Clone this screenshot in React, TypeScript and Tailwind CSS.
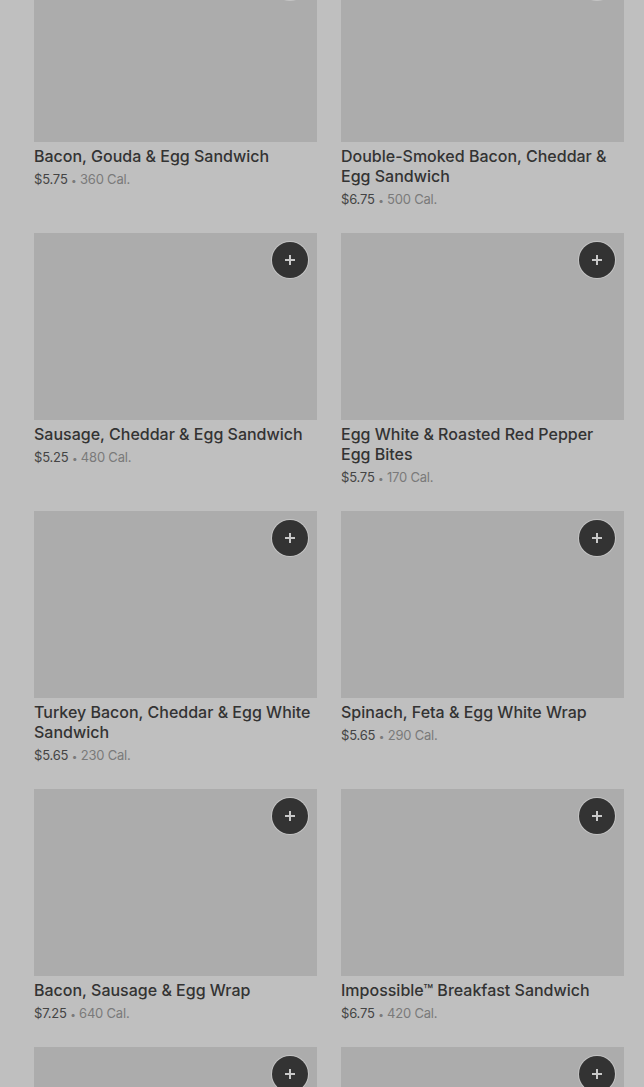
import React from 'react';

// Items in the breakfast section (page is dimmed by an overlay)
const items = [
  { name: "Bacon, Gouda & Egg Sandwich", price: "$5.75", cal: "360 Cal." },
  { name: "Double-Smoked Bacon, Cheddar & Egg Sandwich", price: "$6.75", cal: "500 Cal." },
  { name: "Sausage, Cheddar & Egg Sandwich", price: "$5.25", cal: "480 Cal." },
  { name: "Egg White & Roasted Red Pepper Egg Bites", price: "$5.75", cal: "170 Cal." },
  { name: "Turkey Bacon, Cheddar & Egg White Sandwich", price: "$5.65", cal: "230 Cal." },
  { name: "Spinach, Feta & Egg White Wrap", price: "$5.65", cal: "290 Cal." },
  { name: "Bacon, Sausage & Egg Wrap", price: "$7.25", cal: "640 Cal." },
  { name: "Impossible™ Breakfast Sandwich", price: "$6.75", cal: "420 Cal." },
  { name: "Ham & Swiss on Baguette", price: "$6.25", cal: "510 Cal." },
  { name: "Chicken Sausage & Egg Sandwich", price: "$5.95", cal: "420 Cal." },
];

const PlusIcon = () => (
  <svg width="12" height="12" viewBox="0 0 12 12" fill="none">
    <path d="M6 1v10M1 6h10" stroke="currentColor" strokeWidth="2" />
  </svg>
);

const ItemCard: React.FC<{ name: string; price: string; cal: string }> = ({ name, price, cal }) => (
  <div className="flex flex-col">
    <div className="relative h-[187px] bg-[#acacac]">
      <button className="absolute top-[9px] right-[9px] w-9 h-9 rounded-full bg-[#333333] text-[#c9c9c9] flex items-center justify-center ring-1 ring-[#c4c4c4]">
        <PlusIcon />
      </button>
    </div>
    <h3 className="mt-1 text-[16px] leading-5 font-medium text-[#333333]">{name}</h3>
    <p className="mt-[3px] h-5 text-[13px] leading-5 tracking-[-0.2px] text-[#444444]">
      {price} <span className="text-[10px] leading-none align-middle text-[#7a7a7a]">•</span>{' '}
      <span className="text-[#7a7a7a]">{cal}</span>
    </p>
  </div>
);

export default function App() {
  return (
    <div
      className="h-[1087px] overflow-hidden bg-[#bfbfbf] pl-[34px] pr-[20px]"
      style={{ fontFamily: 'Inter, "Noto Sans", sans-serif' }}
    >
      <div className="-mt-[45px] grid grid-cols-2 gap-x-6 gap-y-6">
        {items.map((it) => (
          <ItemCard key={it.name} {...it} />
        ))}
      </div>
    </div>
  );
}
